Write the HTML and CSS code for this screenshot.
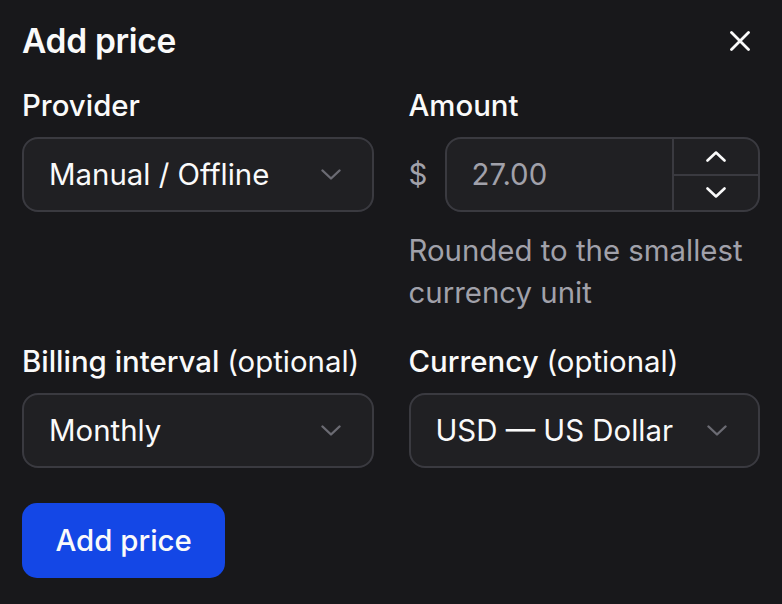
FILE: index.html
```html
<!DOCTYPE html>
<html lang="en">
<head>
<meta charset="utf-8">
<title>Add price</title>
<link rel="stylesheet" href="styles.css">
</head>
<body>
<div class="dialog">
  <div class="header">
    <h1 class="title">Add price</h1>
    <button class="close" aria-label="Close">
      <svg width="20" height="20" viewBox="0 0 20 20"><path d="M1.5 1.5 L18.5 18.5 M18.5 1.5 L1.5 18.5" stroke="#fafafa" stroke-width="2.8" stroke-linecap="round" fill="none"/></svg>
    </button>
  </div>
  <div class="grid">
    <div class="field">
      <div class="label">Provider</div>
      <div class="select">
        <span class="value">Manual / Offline</span>
        <svg class="chev" width="20" height="11" viewBox="0 0 20 11"><path d="M1.5 1.5 L10 9.5 L18.5 1.5" stroke="#6b6b73" stroke-width="2.4" stroke-linecap="round" stroke-linejoin="round" fill="none"/></svg>
      </div>
    </div>
    <div class="field">
      <div class="label">Amount</div>
      <div class="amount-row">
        <span class="currency">$</span>
        <div class="number">
          <span class="num-value">27.00</span>
          <div class="stepper">
            <div class="step">
              <svg width="20" height="11" viewBox="0 0 20 11"><path d="M1.5 9.5 L10 1.5 L18.5 9.5" stroke="#fafafa" stroke-width="2.6" stroke-linecap="round" stroke-linejoin="round" fill="none"/></svg>
            </div>
            <div class="step step-down">
              <svg width="20" height="11" viewBox="0 0 20 11"><path d="M1.5 1.5 L10 9.5 L18.5 1.5" stroke="#fafafa" stroke-width="2.6" stroke-linecap="round" stroke-linejoin="round" fill="none"/></svg>
            </div>
          </div>
        </div>
      </div>
      <p class="help">Rounded to the smallest currency unit</p>
    </div>
    <div class="field">
      <div class="label">Billing interval <span class="opt">(optional)</span></div>
      <div class="select">
        <span class="value">Monthly</span>
        <svg class="chev" width="20" height="11" viewBox="0 0 20 11"><path d="M1.5 1.5 L10 9.5 L18.5 1.5" stroke="#6b6b73" stroke-width="2.4" stroke-linecap="round" stroke-linejoin="round" fill="none"/></svg>
      </div>
    </div>
    <div class="field">
      <div class="label">Currency <span class="opt">(optional)</span></div>
      <div class="select">
        <span class="value">USD — US Dollar</span>
        <svg class="chev" width="20" height="11" viewBox="0 0 20 11"><path d="M1.5 1.5 L10 9.5 L18.5 1.5" stroke="#6b6b73" stroke-width="2.4" stroke-linecap="round" stroke-linejoin="round" fill="none"/></svg>
      </div>
    </div>
  </div>
  <button class="submit">Add price</button>
</div>
</body>
</html>
```
FILE: styles.css
```css
* { box-sizing: border-box; }
html, body {
  margin: 0;
  padding: 0;
  background: #18181b;
  color: #fafafa;
  font-family: Inter, "Noto Sans", sans-serif;
}
.dialog {
  padding: 21px 22px 0 22px;
  display: flex;
  flex-direction: column;
  align-items: flex-start;
}
.header {
  width: 100%;
  display: flex;
  align-items: center;
  justify-content: space-between;
  height: 40px;
}
.title {
  margin: 0;
  font-size: 33.5px;
  line-height: 40px;
  font-weight: 600;
  letter-spacing: -0.3px;
}
.close {
  background: none;
  border: 0;
  padding: 0;
  width: 20px;
  height: 20px;
  margin-right: 10px;
  display: flex;
}
.grid {
  width: 100%;
  margin-top: 25px;
  display: grid;
  grid-template-columns: 1fr 1fr;
  column-gap: 35px;
  row-gap: 28px;
}
.field {
  display: flex;
  flex-direction: column;
}
.label {
  font-size: 29.4px;
  line-height: 40px;
  font-weight: 500;
  margin-bottom: 11px;
  white-space: nowrap;
}
.opt {
  font-weight: 400;
}
.select {
  height: 75px;
  border: 2px solid #3a3a40;
  border-radius: 16px;
  background: #202023;
  display: flex;
  align-items: center;
  justify-content: space-between;
  padding: 0 31px 0 25px;
}
.value {
  font-size: 29.4px;
  font-weight: 400;
  color: #fafafa;
}
.amount-row {
  display: flex;
  align-items: center;
  gap: 18px;
}
.currency {
  font-size: 29.4px;
  color: #a1a1aa;
  width: 18px;
}
.number {
  flex: 1;
  height: 75px;
  border: 2px solid #3a3a40;
  border-radius: 16px;
  background: #202023;
  display: flex;
  align-items: stretch;
  overflow: hidden;
}
.num-value {
  flex: 1;
  display: flex;
  align-items: center;
  padding-left: 25px;
  font-size: 29.4px;
  color: #a1a1aa;
}
.stepper {
  width: 86px;
  border-left: 2px solid #3a3a40;
  display: flex;
  flex-direction: column;
}
.step {
  flex: 1;
  display: flex;
  align-items: center;
  justify-content: center;
}
.step-down {
  border-top: 2px solid #3a3a40;
}
.help {
  margin: 18px 0 0 0;
  font-size: 29.4px;
  line-height: 42px;
  color: #a1a1aa;
}
.submit {
  margin-top: 35px;
  height: 75px;
  padding: 0 33.5px;
  border: 0;
  border-radius: 15px;
  background: #1447e6;
  color: #fafafa;
  font-family: Inter, "Noto Sans", sans-serif;
  font-size: 29.4px;
  font-weight: 500;
}
```
